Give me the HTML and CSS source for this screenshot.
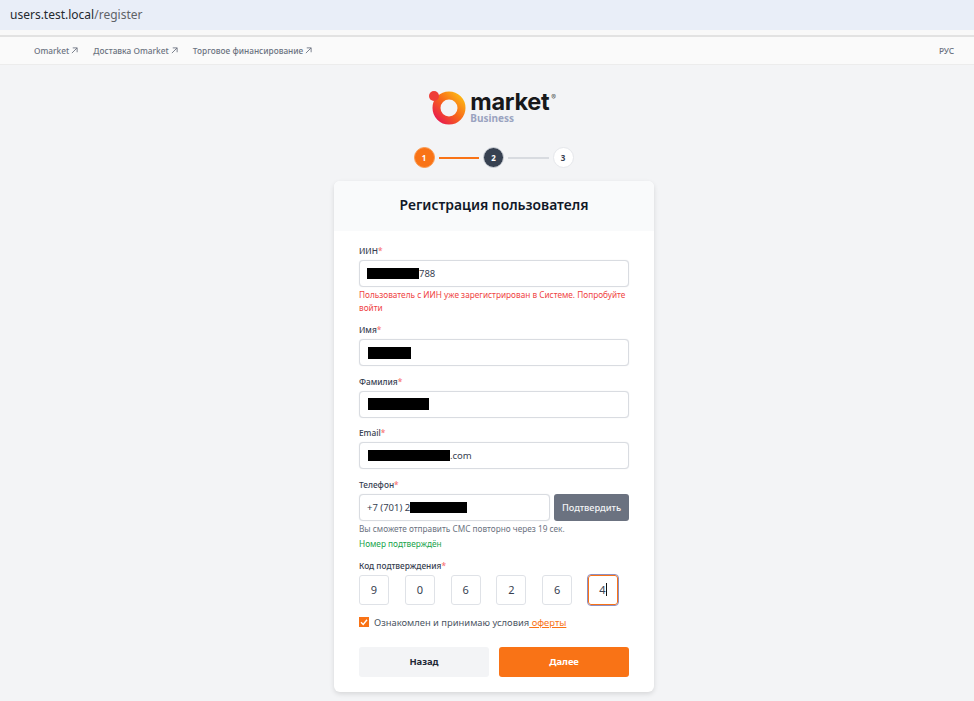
FILE: index.html
```html
<!DOCTYPE html>
<html lang="ru">
  <head>
    <meta charset="UTF-8" />
    <meta name="viewport" content="width=device-width, initial-scale=1.0" />
    <title>Регистрация</title>
    <link rel="stylesheet" href="styles.css">
  </head>

  <body>
    <div class="urlbar"><span class="host">users.test.local</span><span class="path">/register</span></div>

    <nav class="topnav">
      <div class="topnav-links">
        <a class="topnav-link">Omarket <svg class="arrow" viewBox="0 0 8 8"><path d="M1 7 7 1M2 1h5v5" /></svg></a>
        <a class="topnav-link">Доставка Omarket <svg class="arrow" viewBox="0 0 8 8"><path d="M1 7 7 1M2 1h5v5" /></svg></a>
        <a class="topnav-link">Торговое финансирование <svg class="arrow" viewBox="0 0 8 8"><path d="M1 7 7 1M2 1h5v5" /></svg></a>
      </div>
      <span class="topnav-link">РУС</span>
    </nav>

    <main>
      <div class="logo">
        <svg class="logo-mark" viewBox="0 0 37 36">
          <defs>
            <linearGradient id="ring" x1="0" y1="1" x2="1" y2="0">
              <stop offset="0" stop-color="#e8194f" />
              <stop offset="0.5" stop-color="#f7641b" />
              <stop offset="1" stop-color="#fdb913" />
            </linearGradient>
          </defs>
          <circle cx="20" cy="18" r="12.5" fill="none" stroke="url(#ring)" stroke-width="8" />
          <circle cx="5" cy="6" r="5" fill="#ee3d37" />
        </svg>
        <div class="logo-text">
          <div class="logo-name">market<sup class="logo-reg">®</sup></div>
          <div class="logo-sub">Business</div>
        </div>
      </div>

      <div class="steps">
        <span class="step step-done">1</span>
        <span class="step-line step-line-done"></span>
        <span class="step step-current">2</span>
        <span class="step-line"></span>
        <span class="step">3</span>
      </div>

      <section class="card">
        <h1 class="card-title">Регистрация пользователя</h1>
        <form class="card-body">
          <div class="field field-error">
            <label class="label">ИИН<i>*</i></label>
            <div class="input"><span class="redact redact-iin"></span>788</div>
            <p class="msg msg-error">Пользователь с ИИН уже зарегистрирован в Системе. Попробуйте войти</p>
          </div>
          <div class="field">
            <label class="label">Имя<i>*</i></label>
            <div class="input"><span class="redact redact-name"></span></div>
          </div>
          <div class="field">
            <label class="label">Фамилия<i>*</i></label>
            <div class="input"><span class="redact redact-surname"></span></div>
          </div>
          <div class="field">
            <label class="label">Email<i>*</i></label>
            <div class="input"><span class="redact redact-email"></span>.com</div>
          </div>
          <div class="field field-phone">
            <label class="label">Телефон<i>*</i></label>
            <div class="phone-row">
              <div class="input">+7 (701) 2<span class="redact redact-phone"></span></div>
              <button type="button" class="btn-confirm">Подтвердить</button>
            </div>
            <p class="msg msg-hint">Вы сможете отправить СМС повторно через 19 сек.</p>
            <p class="msg msg-ok">Номер подтверждён</p>
          </div>
          <div class="field field-code">
            <label class="label">Код подтверждения<i>*</i></label>
            <div class="code-row">
              <span class="code-box">9</span>
              <span class="code-box">0</span>
              <span class="code-box">6</span>
              <span class="code-box">2</span>
              <span class="code-box">6</span>
              <span class="code-box code-box-active">4<span class="caret"></span></span>
            </div>
          </div>
          <div class="agree">
            <span class="checkbox"><svg viewBox="0 0 10 10"><path d="M2 5.2 4.2 7.4 8 2.8" /></svg></span>
            <span>Ознакомлен и принимаю условия<a class="agree-link"> оферты</a></span>
          </div>
          <div class="actions">
            <button type="button" class="btn btn-back">Назад</button>
            <button type="button" class="btn btn-next">Далее</button>
          </div>
        </form>
      </section>
    </main>
  </body>
</html>
```

FILE: styles.css
```css
* {
  margin: 0;
  padding: 0;
  box-sizing: border-box;
}

body {
  background-color: #f3f4f6;
  font-family: "Noto Sans", "Liberation Sans", sans-serif;
  color: #1f2937;
  height: 701px;
  overflow: hidden;
}

.urlbar {
  height: 35px;
  padding-left: 10px;
  background-color: #e9eef8;
  font-size: 12px;
  line-height: 30px;
  border-bottom: 5px solid #f8f8f8;
}

.host {
  color: #24292f;
}

.path {
  color: #5f6368;
}

.topnav {
  height: 30px;
  padding: 0 20px 0 34px;
  display: flex;
  justify-content: space-between;
  align-items: center;
  background-color: #fafafa;
  border-top: 2px solid #e2e2e2;
  border-bottom: 1px solid #ececec;
}

.topnav-links {
  display: flex;
  gap: 15px;
}

.topnav-link {
  font-size: 8.3px;
  font-weight: 500;
  color: #6b7280;
}

.arrow {
  width: 7px;
  height: 7px;
  fill: none;
  stroke: #6b7280;
  stroke-width: 1;
}

main {
  padding-left: 14px;
  display: flex;
  flex-direction: column;
  align-items: center;
}

.logo {
  margin-top: 25px;
  margin-left: -3px;
  display: flex;
  align-items: flex-start;
  gap: 4px;
  height: 36px;
}

.logo-mark {
  width: 37px;
  height: 36px;
}

.logo-name {
  font-family: "Inter", sans-serif;
  font-size: 23.5px;
  font-weight: 700;
  line-height: 23px;
  letter-spacing: -0.3px;
  color: #17181a;
}

.logo-reg {
  font-size: 7px;
  font-weight: 400;
  vertical-align: 10px;
  line-height: 0;
  margin-left: 2px;
  color: #555;
}

.logo-sub {
  font-size: 10px;
  font-weight: 700;
  line-height: 10px;
  color: #9aa3c0;
}

.steps {
  margin-top: 21px;
  margin-left: -1px;
  display: flex;
  align-items: center;
  gap: 4px;
}

.step {
  width: 21px;
  height: 21px;
  border-radius: 50%;
  display: flex;
  align-items: center;
  justify-content: center;
  font-size: 8px;
  font-weight: 700;
  background-color: #fff;
  border: 1px solid #e5e7eb;
  color: #374151;
}

.step-done {
  background-color: #f97316;
  border-color: #fb9a50;
  color: #fff;
}

.step-current {
  background-color: #374151;
  border-color: #d1d5db;
  color: #fff;
}

.step-line {
  width: 40.5px;
  height: 2px;
  background-color: #d8dbe0;
}

.step-line-done {
  background-color: #f97316;
}

.card {
  margin-top: 13px;
  width: 320px;
  height: 511px;
  background-color: #fff;
  border-radius: 6px;
  overflow: hidden;
  box-shadow: 0 2px 5px rgba(0, 0, 0, 0.12);
}

.card-title {
  height: 50px;
  background-color: #f9fafb;
  font-size: 13.9px;
  font-weight: 600;
  line-height: 48px;
  text-align: center;
  color: #111827;
}

.card-body {
  padding: 14px 25px 0;
}

.field {
  margin-bottom: 9.6px;
}

.field-error {
  margin-bottom: 10px;
}

.label {
  display: block;
  font-size: 8.3px;
  font-weight: 500;
  line-height: 12px;
  margin-bottom: 3px;
  color: #374151;
}

.label i {
  font-style: normal;
  color: #f87171;
}

.input {
  height: 27px;
  padding: 0 7px;
  display: flex;
  align-items: center;
  flex: 1;
  background-color: #fff;
  border: 1px solid #d9dce1;
  border-radius: 4px;
  box-shadow: 0 0 1px #d9dce1;
  font-size: 9.5px;
  color: #374151;
  white-space: pre;
}

.redact {
  display: block;
  height: 11px;
  background-color: #000;
}

.redact-iin {
  width: 52px;
}

.redact-name {
  width: 43px;
  height: 12px;
  margin-left: 1px;
}

.redact-surname {
  width: 61px;
  height: 12px;
  margin-left: 1px;
}

.redact-email {
  width: 82px;
  margin-left: 1px;
}

.redact-phone {
  width: 57px;
}

.msg {
  font-size: 8.25px;
  line-height: 13px;
}

.msg-error {
  margin-top: 1px;
  color: #ef4444;
}

.msg-hint {
  margin-top: 1px;
  color: #6b7280;
}

.msg-ok {
  margin-top: 2px;
  color: #16a34a;
}

.phone-row {
  display: flex;
  gap: 4px;
}

.btn-confirm {
  width: 75px;
  height: 27px;
  border: none;
  border-radius: 3px;
  background-color: #6b7280;
  color: #f3f4f6;
  font-family: inherit;
  font-size: 9.2px;
  font-weight: 500;
}

.field-code {
  margin-top: 10px;
  margin-bottom: 11px;
}

.code-row {
  width: 259px;
  display: flex;
  justify-content: space-between;
  align-items: center;
}

.code-box {
  width: 30px;
  height: 30px;
  display: flex;
  align-items: center;
  justify-content: center;
  border: 1px solid #dfe2e7;
  border-radius: 3px;
  font-size: 11px;
  color: #374151;
}

.code-box-active {
  border: 1px solid #f97316;
  outline: 1px solid #8f8fc0;
}

.caret {
  width: 1px;
  height: 13px;
  background-color: #111;
}

.agree {
  display: flex;
  align-items: center;
  gap: 5px;
  font-size: 9.4px;
  color: #4b5563;
}

.checkbox {
  width: 10px;
  height: 10px;
  background-color: #f97316;
  display: flex;
}

.checkbox path {
  fill: none;
  stroke: #fff;
  stroke-width: 1.4;
}

.agree-link {
  color: #f97316;
  text-decoration: underline;
}

.actions {
  margin-top: 18px;
  display: flex;
  gap: 10px;
}

.btn {
  flex: 1;
  height: 30px;
  border: none;
  border-radius: 3px;
  font-family: inherit;
  font-size: 9.4px;
  font-weight: 700;
}

.btn-back {
  background-color: #f3f4f6;
  color: #1f2937;
}

.btn-next {
  background-color: #f97316;
  color: #fff;
}
```
